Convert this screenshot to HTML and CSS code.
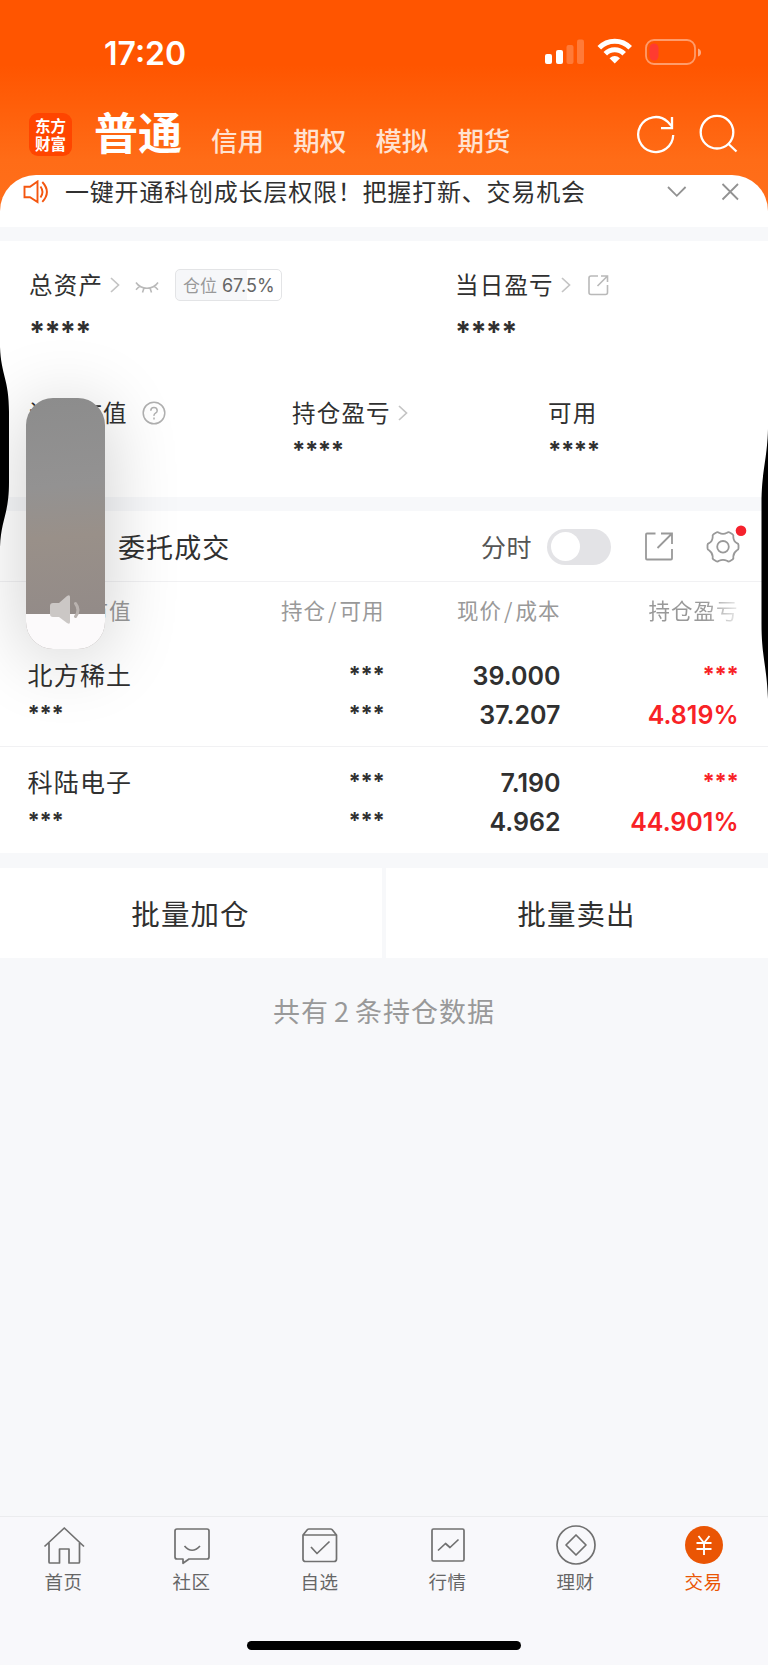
FILE: index.html
```html
<!DOCTYPE html>
<html lang="zh-CN">
<head>
<meta charset="utf-8">
<title>交易</title>
<link rel="stylesheet" href="styles.css">
</head>
<body>
<div class="phone">
  <header class="header">
    <div class="status">
      <span class="clock">17:20</span>
      <svg class="status-icons" width="160" height="30" viewBox="0 0 160 30">
        <g fill="#fff">
          <rect x="1" y="17" width="7" height="10" rx="2"/>
          <rect x="12" y="13" width="7" height="14" rx="2"/>
          <rect x="22.500" y="8" width="7" height="19" rx="2" opacity=".22"/>
          <rect x="33" y="2.500" width="7" height="24.500" rx="2" opacity=".22"/>
        </g>
        <g fill="none" stroke="#fff" stroke-width="5">
          <path d="M55.300 10.800A21.500 21.500 0 0 1 86.200 10.800"/>
          <path d="M61.300 16.700A13.300 13.300 0 0 1 80.200 16.700"/>
        </g>
        <path d="M65.500 21.300Q70.750 16.800 76 21.300L70.750 26.500Z" fill="#fff"/>
        <rect x="102" y="3" width="49" height="24" rx="8" fill="none" stroke="#fff" stroke-width="1.800" opacity=".42"/>
        <rect x="105.500" y="6.500" width="9" height="17" rx="4.500" fill="#ff3b30"/>
        <path d="M154 11.500q3 1 3 4t-3 4z" fill="#fff" opacity=".5"/>
      </svg>
    </div>
    <div class="nav">
      <div class="logo">东方<br>财富</div>
      <b class="nav-current">普通</b>
      <span class="nav-item">信用</span>
      <span class="nav-item">期权</span>
      <span class="nav-item">模拟</span>
      <span class="nav-item">期货</span>
      <svg class="nav-icons" width="104" height="42" viewBox="0 0 104 42" fill="none" stroke="#fff" stroke-width="2.300">
        <path d="M37.200 21A17.500 17.500 0 1 1 31.500 7.600L35.500 12"/>
        <path d="M36 3V14.200H25"/>
        <circle cx="81" cy="18.200" r="16.300"/>
        <path d="M92 29.500L100.500 37.500"/>
      </svg>
    </div>
  </header>

  <section class="notice">
    <svg class="horn" width="26" height="24" viewBox="0 0 26 24" fill="none" stroke="#f4560f" stroke-width="1.900">
      <path d="M1.500 6.800H7L14.500 1.500V22L7 17.300H1.500Z"/>
      <path d="M17.500 6.500Q21.500 12 17.500 17.500M19.300 2Q28.500 12 19.300 21.800"/>
    </svg>
    <span class="notice-text">一键开通科创成长层权限！把握打新、交易机会</span>
    <svg class="notice-actions" width="74" height="20" viewBox="0 0 74 20" fill="none" stroke="#929292" stroke-width="1.800">
      <path d="M2 5L10.800 13.800L19.600 5M56.500 2L72 17.500M72 2L56.500 17.500"/>
    </svg>
  </section>

  <section class="assets">
    <div class="line line-top">
      <div class="cell">
        <span class="label">总资产</span>
        <svg class="chev" width="10" height="16" viewBox="0 0 10 16"><path d="M1 1L8.500 8L1 15"/></svg>
        <svg class="eye" width="24" height="14" viewBox="0 0 24 14"><path d="M1 1.500Q5 7.300 12 7.300T23 1.500M4.500 5.300L1 8.800M19.500 5.300L23 8.800M9 7L7.500 11.500M15 7L16.500 11.500"/></svg>
        <span class="badge">仓位 <i>67.5%</i></span>
      </div>
      <div class="cell">
        <span class="label">当日盈亏</span>
        <svg class="chev" width="10" height="16" viewBox="0 0 10 16"><path d="M1 1L8.500 8L1 15"/></svg>
        <svg class="share" width="22" height="22" viewBox="0 0 22 22"><path d="M11 2H4Q2 2 2 4V18.500Q2 20.500 4 20.500H18.500Q20.500 20.500 20.500 18.500V11M14 2H20.500V8M20 2.500L10.500 12"/></svg>
      </div>
    </div>
    <div class="line line-stars"><b class="stars big">****</b><b class="stars big">****</b></div>
    <div class="line line-sub">
      <div class="cell">
        <span class="label">证券市值</span>
        <svg class="help" width="24" height="24" viewBox="0 0 24 24"><circle cx="12" cy="12" r="10.800"/><path d="M8.800 9.800Q8.800 6.600 12 6.600T15.200 9.700Q15.200 11.200 13.500 12.200T12 14.800M12 16.600V18.400"/></svg>
      </div>
      <div class="cell">
        <span class="label">持仓盈亏</span>
        <svg class="chev" width="10" height="16" viewBox="0 0 10 16"><path d="M1 1L8.500 8L1 15"/></svg>
      </div>
      <div class="cell"><span class="label">可用</span></div>
    </div>
    <div class="line line-sub-stars"><b class="stars mid">****</b><b class="stars mid">****</b></div>
  </section>

  <section class="holdings">
    <div class="toolbar">
      <span class="tab">委托成交</span>
      <span class="minute">分时</span>
      <span class="toggle"></span>
      <svg class="tool-share" width="30" height="30" viewBox="0 0 30 30"><path d="M11.500 1.500H3Q2 1.500 2 2.500V26.500Q2 27.500 3 27.500H27Q28 27.500 28 26.500V17M17 1.500H28V12M27.500 2L13.500 16"/></svg>
      <svg class="gear" width="44" height="44" viewBox="0 0 44 44">
        <path d="M15.300 7.500Q16.500 6.500 18 7.800Q22 10 26 7.800Q27.500 6.500 28.700 7.500L31.500 9.200Q32.800 10 32.300 12Q32.500 16.500 36 18.200Q37.500 18.800 37.500 20V23.200Q37.500 24.500 36 25.200Q32.500 27.500 32.300 31.500Q32.800 33.500 31.500 34.500L28.700 36.200Q27.500 37 26 35.800Q22 33.800 18 35.800Q16.500 37 15.300 36.200L12.500 34.500Q11.200 33.500 11.700 31.500Q11.500 27.500 8 25.200Q6.500 24.500 6.500 23.200V20Q6.500 18.800 8 18.200Q11.500 16.500 11.700 12Q11.200 10 12.500 9.200Z"/>
        <circle cx="22" cy="21.800" r="5.800"/>
        <circle class="dot" cx="40" cy="5.800" r="5.300"/>
      </svg>
    </div>
    <div class="row thead">
      <span>市值</span><span>持仓<em>/</em>可用</span><span>现价<em>/</em>成本</span><span class="fade">持仓盈亏</span>
    </div>
    <div class="row pos">
      <span class="name">北方稀土</span><b class="stars sm">***</b><span class="num">39.000</span><b class="stars sm red">***</b>
      <b class="stars sm">***</b><b class="stars sm">***</b><span class="num">37.207</span><span class="num red">4.819%</span>
    </div>
    <div class="row pos">
      <span class="name">科陆电子</span><b class="stars sm">***</b><span class="num">7.190</span><b class="stars sm red">***</b>
      <b class="stars sm">***</b><b class="stars sm">***</b><span class="num">4.962</span><span class="num red">44.901%</span>
    </div>
  </section>

  <section class="batch"><span>批量加仓</span><span>批量卖出</span></section>
  <p class="total">共有<i>2</i>条持仓数据</p>

  <nav class="tabbar">
    <div class="tabs">
      <div class="tabitem">
        <svg width="44" height="42" viewBox="0 0 44 42"><path d="M2.500 21.500L22.300 3L42 21.500M7 18V37Q7 38 8 38H17.500V24H27V38H36.500Q37.500 38 37.500 37V18"/></svg>
        <span>首页</span>
      </div>
      <div class="tabitem">
        <svg width="44" height="42" viewBox="0 0 44 42"><path d="M7 4H37Q39 4 39 6V32Q39 34 37 34H19L13 38.300V34H7Q5 34 5 32V6Q5 4 7 4ZM14.500 21Q22 29.500 30 21"/></svg>
        <span>社区</span>
      </div>
      <div class="tabitem">
        <svg width="44" height="42" viewBox="0 0 44 42"><path d="M5 10L9.500 4.500Q10 4 11 4H32.500Q33.500 4 34 4.500L38.500 10V34Q38.500 36.500 36 36.500H7.500Q5 36.500 5 34ZM5 10H38.500M13 22L19 28.500L31.500 16.500"/></svg>
        <span>自选</span>
      </div>
      <div class="tabitem">
        <svg width="44" height="42" viewBox="0 0 44 42"><rect x="6" y="4" width="32" height="32" rx="1.500"/><path d="M12 25.500L19.500 18.500L24 22.500L32.500 14.500"/></svg>
        <span>行情</span>
      </div>
      <div class="tabitem">
        <svg width="44" height="42" viewBox="0 0 44 42"><circle cx="22" cy="20" r="19"/><path d="M22 10L32 20L22 30L12 20Z"/></svg>
        <span>理财</span>
      </div>
      <div class="tabitem active">
        <svg width="44" height="42" viewBox="0 0 44 42"><circle cx="22" cy="20" r="19"/><path d="M16.500 11L22 18L27.500 11M22 18V30M14.500 18H29.500M14.500 24H29.500"/></svg>
        <span>交易</span>
      </div>
    </div>
    <div class="home-indicator"></div>
  </nav>

  <svg class="bump bump-left" width="10" height="200" viewBox="0 0 10 200"><path d="M0 0C1 28 9 32 9 65V135C9 168 1 172 0 200Z"/></svg>
  <svg class="bump bump-right" width="8" height="270" viewBox="0 0 8 270"><path d="M8 0C7 32 1.500 42 1.500 75V195C1.500 228 7 238 8 270Z"/></svg>

  <div class="volume">
    <div class="level"></div>
    <svg class="speaker" width="34" height="32" viewBox="0 0 34 32">
      <path d="M4 9H10L18 2Q21 0 21 3V28Q21 31 18 29L10 23H4Q1 23 1 20V12Q1 9 4 9Z" fill="#cbc7c5"/>
      <path d="M26.500 9.500Q31.500 16 26.500 22.500" fill="none" stroke="#b9b2af" stroke-width="3" stroke-linecap="round"/>
    </svg>
  </div>
</div>
</body>
</html>
```
FILE: styles.css
```css
* { box-sizing: border-box; }
body { margin: 0; background: #f7f8fa; font-family: "Noto Sans CJK SC", sans-serif; color: #303030; }
i, em { font-style: normal; }
svg { display: block; flex: none; }
.phone { position: relative; width: 768px; height: 1665px; overflow: hidden; display: flex; flex-direction: column; background: #f7f8fa; }

.header { flex: none; height: 227px; background: linear-gradient(#ff5500 0, #ff5500 65px, #ff6c17 160px, #ff701c 227px); color: #fff; }
.status { height: 100px; padding: 37px 0 0 104px; display: flex; align-items: flex-start; }
.clock { width: 440px; font: 600 32px/33px Inter, sans-serif; }
.nav { height: 75px; padding-left: 29px; display: flex; align-items: flex-start; white-space: nowrap; }
.logo { width: 43px; height: 43px; margin-top: 13px; padding-top: 3px; border-radius: 9px; background: #ff4500; font: 700 15.500px/18px "Noto Sans CJK SC", sans-serif; text-align: center; }
.nav-current { width: 117px; margin-left: 22px; font-size: 44px; line-height: 60px; margin-top: 1px; font-weight: 700; }
.nav-item { width: 82.200px; font-size: 26.500px; line-height: 36px; margin-top: 22px; font-weight: 500; color: #ffe2d1; }
.nav-icons { margin: 14px 0 0 96px; }

.notice { flex: none; height: 52px; margin-top: -52px; padding: 0 24px 19px 23px; display: flex; align-items: center; background: #fff; border-radius: 36px 36px 0 0; }
.notice-text { width: 601px; margin-left: 16px; font-size: 24px; letter-spacing: .8px; line-height: 34px; margin-top: -2px; white-space: nowrap; }

.assets { flex: none; height: 256px; margin-top: 14px; background: #fff; }
.line { display: grid; padding-left: 29px; }
.line-top { grid-template-columns: 426px 1fr; padding-top: 26px; }
.line-stars { grid-template-columns: 426px 1fr; padding: 16px 0 0 29px; }
.line-sub { grid-template-columns: 263px 256px 1fr; padding-top: 50px; }
.line-sub-stars { grid-template-columns: 256px 1fr; padding: 9px 0 0 292px; }
.cell { display: flex; align-items: center; height: 36px; }
.label { font-size: 23.500px; letter-spacing: 1.200px; line-height: 36px; margin-top: -2px; white-space: nowrap; }
.chev { margin-left: 7px; margin-top: -1px; fill: none; stroke: #c4c4c4; stroke-width: 1.700; }
.eye { margin: 6px 0 0 15px; fill: none; stroke: #b9b9b9; stroke-width: 1.600; }
.badge { width: 107px; height: 32px; margin-left: 16px; border: 1px solid #e3e4e6; border-radius: 5px; background: linear-gradient(90deg, #f6f7f9 71px, #fff 71px); padding-left: 7px; font-size: 17px; line-height: 30px; color: #999; white-space: nowrap; }
.badge i { font: 400 18px Inter, sans-serif; color: #666; margin-left: 1px; }
.share { margin-left: 16px; margin-top: -1px; fill: none; stroke: #b9b9b9; stroke-width: 1.600; }
.help { margin-left: 14px; margin-top: -1px; fill: none; stroke: #b0b0b0; stroke-width: 1.500; }
.stars { font-family: Inter, sans-serif; font-weight: 700; }
.big { font-size: 29px; line-height: 26px; letter-spacing: -.8px; }
.mid { font-size: 24px; line-height: 22px; letter-spacing: -.5px; }
.sm { font-size: 22px; line-height: 20px; letter-spacing: -.3px; }

.holdings { flex: none; height: 342px; margin-top: 14px; background: #fff; }
.toolbar { height: 71px; padding: 1px 0 0 118px; border-bottom: 1px solid #f1f1f3; display: flex; align-items: center; }
.tab { width: 363px; font-size: 27px; letter-spacing: 1.100px; margin-top: -1px; }
.minute { width: 66px; font-size: 25px; letter-spacing: .5px; color: #555; margin-top: -1px; }
.toggle { width: 64px; height: 36px; border-radius: 18px; background: #e3e3e6; padding: 3.500px; }
.toggle::before { content: ""; display: block; width: 29px; height: 29px; border-radius: 50%; background: #fff; }
.tool-share { margin-left: 33px; fill: none; stroke: #999; stroke-width: 1.800; }
.gear { margin-left: 27px; overflow: visible; fill: none; stroke: #999; stroke-width: 1.800; stroke-linejoin: round; }
.gear .dot { fill: #f5222d; stroke: none; }
.row { display: grid; grid-template-columns: 160px 197px 176px 178px; padding-left: 27.500px; }
.row > * { text-align: right; }
.row > :nth-child(4n+1) { text-align: left; }
.thead { height: 59px; font-size: 21.500px; line-height: 56px; letter-spacing: 1px; color: #999; }
.thead > :first-child { padding-left: 59px; }
.thead em { margin: 0 2px; }
.fade { -webkit-mask-image: linear-gradient(90deg, #000 145px, transparent 185px); mask-image: linear-gradient(90deg, #000 145px, transparent 185px); }
.pos { height: 105px; padding-top: 16px; grid-template-rows: 39px 39px; }
.pos + .pos { height: 107px; padding-top: 17px; border-top: 1px solid #f1f1f3; }
.name { font-size: 25px; letter-spacing: 1.200px; line-height: 34px; }
.num { font: 600 25px/39px Inter, sans-serif; }
.pos .sm { padding-top: 7px; }
.red { color: #f82226; }

.batch { flex: none; height: 90px; margin-top: 15px; display: grid; grid-template-columns: 382px 382px; gap: 4px; }
.batch span { background: #fff; text-align: center; font-size: 28.500px; letter-spacing: 1.100px; line-height: 89px; padding-right: 1px; }
.total { margin: 32px 0 0; text-align: center; font-size: 27px; letter-spacing: 1px; line-height: 42px; color: #999; }
.total i { margin: 0 5px; }

.tabbar { height: 149px; margin-top: auto; border-top: 1px solid #ebecee; background: #f8f8fb; }
.tabs { display: grid; grid-template-columns: repeat(6, 128px); padding-top: 8px; height: 124px; }
.tabitem { display: flex; flex-direction: column; align-items: center; font-size: 18.500px; line-height: 28px; letter-spacing: .6px; color: #666; }
.tabitem span { margin-right: 1px; }
.tabitem svg { fill: none; stroke: #707070; stroke-width: 1.700; stroke-linejoin: round; }
.tabitem.active { color: #ea5504; }
.tabitem.active svg { stroke: #fff; stroke-width: 1.900; }
.active circle { fill: #ea5504; stroke: none; }
.home-indicator { width: 274px; height: 9px; margin: 0 auto; border-radius: 5px; background: #000; }

.bump { position: absolute; }
.bump-left { left: 0; top: 347px; }
.bump-right { right: 0; top: 429px; }
.volume { position: absolute; left: 26px; top: 398px; width: 79px; height: 251px; border-radius: 27px; overflow: hidden; background: linear-gradient(175deg, #8c8c8c 0, #939292 35%, #999089 55%, #938b88 85%); box-shadow: 0 8px 75px rgba(0, 0, 0, .2); }
.level { height: 35px; margin-top: 216px; background: #fcfafb; }
.speaker { position: absolute; left: 23px; top: 196px; }
```
